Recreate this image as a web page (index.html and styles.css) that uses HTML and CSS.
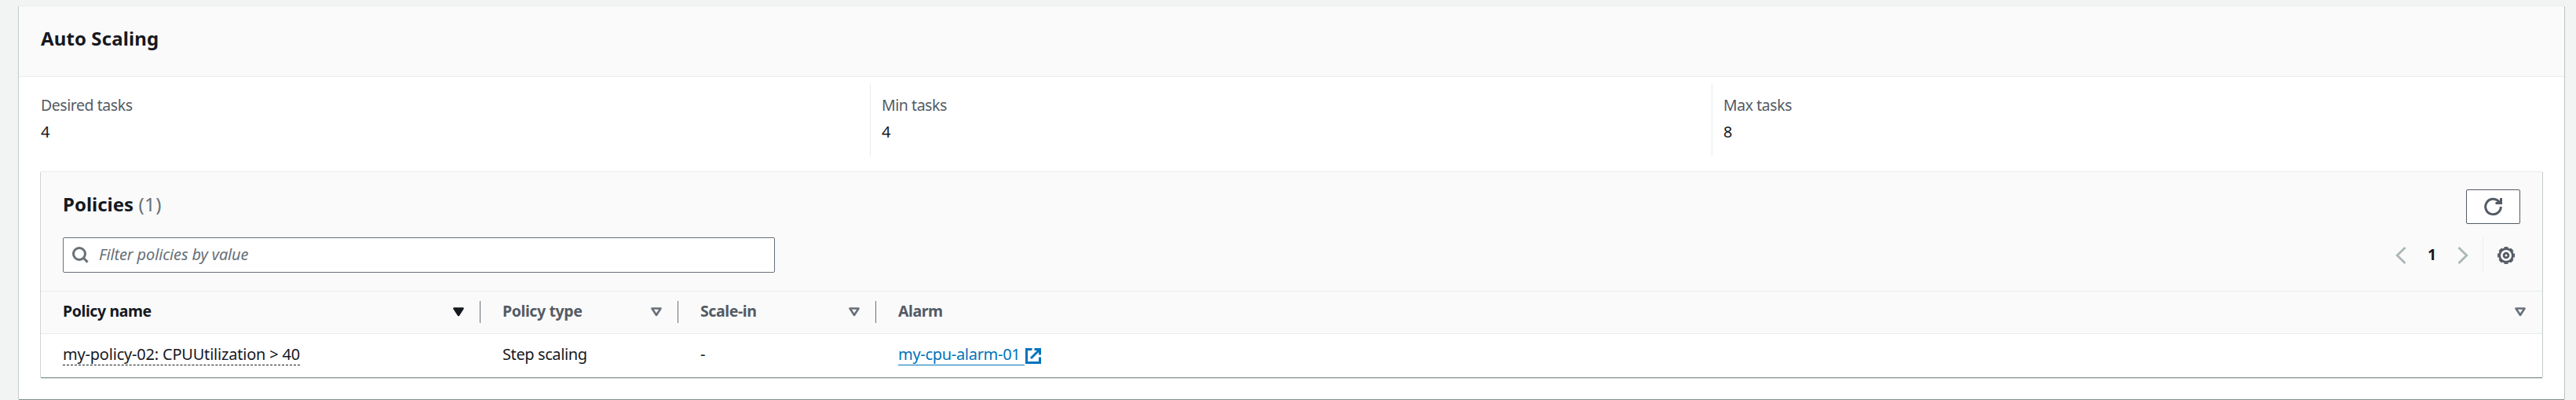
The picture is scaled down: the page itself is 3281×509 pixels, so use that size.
FILE: index.html
```
<!DOCTYPE html>
<html lang="en">
<head>
<meta charset="utf-8">
<title>Auto Scaling</title>
<link rel="stylesheet" href="styles.css">
</head>
<body>
<main class="card">
  <header class="card-header"><h2 class="title title-main">Auto Scaling</h2></header>
  <dl class="stats">
    <div class="stat"><dt>Desired tasks</dt><dd>4</dd></div>
    <div class="stat"><dt>Min tasks</dt><dd>4</dd></div>
    <div class="stat"><dt>Max tasks</dt><dd>8</dd></div>
  </dl>
  <section class="panel">
    <div class="panel-top">
      <h2 class="title">Policies <span class="count">(1)</span></h2>
      <button class="refresh" aria-label="Refresh">
        <svg width="24" height="24" viewBox="0 0 24 24"><path d="M21.3 12A9.8 9.8 0 1 1 18.6 5.2L20 7M21.5 1V7.5H14.5"/></svg>
      </button>
    </div>
    <div class="tools">
      <div class="search">
        <svg width="21" height="21" viewBox="0 0 21 21"><circle cx="9" cy="9" r="7.5"/><path d="M14.3 14.3 19.6 19.6"/></svg>
        <span class="placeholder">Filter policies by value</span>
      </div>
      <div class="pager">
        <svg class="chev" width="14" height="22" viewBox="0 0 14 22"><path d="M12.5 1 2.2 11 12.5 21"/></svg>
        <b class="page">1</b>
        <svg class="chev" width="14" height="22" viewBox="0 0 14 22"><path d="M1.5 1 11.8 11 1.5 21"/></svg>
        <span class="prefs">
          <svg class="gear" width="24" height="24" viewBox="-12 -12 24 24"><circle r="8.4"/><circle class="teeth" r="10.2" pathLength="16"/><circle r="2.9"/></svg>
        </span>
      </div>
    </div>
    <div class="row head">
      <div class="cell active">Policy name<svg width="14" height="12" viewBox="0 0 14 12"><path class="solid" d="M1.5 1.5H12.5L7 10Z"/></svg></div>
      <div class="cell">Policy type<svg width="14" height="12" viewBox="0 0 14 12"><path d="M1.5 1.5H12.5L7 10Z"/></svg></div>
      <div class="cell">Scale-in<svg width="14" height="12" viewBox="0 0 14 12"><path d="M1.5 1.5H12.5L7 10Z"/></svg></div>
      <div class="cell">Alarm<svg width="14" height="12" viewBox="0 0 14 12"><path d="M1.5 1.5H12.5L7 10Z"/></svg></div>
    </div>
    <div class="row body">
      <div class="cell"><span class="policy">my-policy-02: CPUUtilization &gt; 40</span></div>
      <div class="cell type">Step scaling</div>
      <div class="cell">-</div>
      <div class="cell"><a class="link"><span class="link-text">my-cpu-alarm-01</span><svg width="20" height="20" viewBox="0 0 20 20"><path d="M8.5 1.5H1.5V18.5H18.5V11.5M11.5 1.5H18.5V8.5M18 2 7 13"/></svg></a></div>
    </div>
  </section>
</main>
</body>
</html>
```
FILE: styles.css
```
* { box-sizing: border-box; }
body {
  margin: 0;
  height: 509px;
  overflow: hidden;
  padding: 8px 15px 0 24px;
  background: #f2f3f3;
  color: #16191f;
  font: 20px/30px "Noto Sans", sans-serif;
}
svg { fill: none; stroke: currentColor; flex: none; display: block; }
.card {
  height: 500px;
  background: #fff;
  box-shadow: 0 -1px 0 #eaeded, -1px 0 0 #c5cccf, 1px 0 0 #b9c3c7, 0 1px 0 #7f8c8d;
}
.card-header {
  height: 90px;
  padding: 23px 28px 0;
  background: #fafafa;
  border-bottom: 1px solid #eaeded;
}
.title { margin: 0; font-size: 24px; line-height: 36px; font-weight: 700; }
.title-main { letter-spacing: .1px; }
.count { font-weight: 400; color: #687078; letter-spacing: .5px; }
.stats {
  display: grid;
  grid-template-columns: 1084px 1072px 1fr;
  height: 93px;
  margin: 8px 0 0;
}
.stat { padding: 13px 0 0 14px; border-left: 1px solid #eaeded; }
.stat:first-child { padding-left: 28px; border-left: 0; }
dt { color: #545b64; font-size: 19.5px; line-height: 30px; letter-spacing: -.45px; }
dd { margin: 4px 0 0; line-height: 30px; }
.panel {
  width: 3186px;
  height: 261px;
  margin: 20px 0 0 28px;
  background: #fff;
  box-shadow: 0 -1px 0 #eaeded, -1px 0 0 #cdd3d5, 1px 0 0 #c5ccd0, 0 1px 0 #879596, 0 2px 0 #d5dbdb;
}
.panel-top {
  display: flex;
  justify-content: space-between;
  align-items: flex-start;
  height: 83px;
  padding: 22px 28px 0;
  background: #fafafa;
}
.panel-top .title { padding-top: 1px; }
.refresh {
  display: grid;
  place-items: center;
  width: 69px;
  height: 44px;
  padding: 0;
  border: 1px solid #545b64;
  border-radius: 2px;
  background: #fff;
  color: #545b64;
  stroke-width: 3;
}
.tools {
  display: flex;
  justify-content: space-between;
  height: 69px;
  padding: 0 28px;
  background: #fafafa;
  border-bottom: 1px solid #eaeded;
}
.search {
  display: flex;
  align-items: center;
  gap: 13px;
  width: 907px;
  height: 45px;
  padding-left: 11px;
  border: 1px solid #687078;
  border-radius: 2px;
  background: #fff;
  color: #687078;
  stroke-width: 3;
}
.placeholder { font-style: italic; padding-bottom: 1px; letter-spacing: -.15px; }
.pager { display: flex; align-items: center; height: 46px; }
.chev { color: #aab7b8; stroke-width: 2.8; }
.page { width: 65px; text-align: center; padding-bottom: 2px; font-size: 19.5px; }
.prefs {
  display: flex;
  align-items: center;
  height: 44px;
  margin: 0 6px 0 18px;
  padding-left: 17px;
  border-left: 1px solid #eaeded;
}
.gear { color: #545b64; stroke-width: 2.8; }
.teeth { stroke-width: 1.7; stroke-dasharray: 1.3 .7; stroke-dashoffset: .65; }
.row { display: grid; grid-template-columns: 560px 252px 252px 1fr; }
.head {
  height: 54px;
  padding: 12px 0 13px;
  background: #fafafa;
  border-bottom: 1px solid #eaeded;
  color: #545b64;
  font-weight: 700;
  font-size: 19.5px;
  line-height: 24px;
  letter-spacing: -.4px;
}
.cell { display: flex; align-items: center; padding-left: 28px; }
.head .cell { justify-content: space-between; padding-right: 20px; padding-bottom: 3px; border-right: 1px solid #687078; }
.head .cell:last-child { border-right: 0; padding-right: 21px; }
.head svg { margin-top: 2px; color: #687078; stroke-width: 2.6; stroke-linejoin: round; }
.head .active, .head .active svg { color: #16191f; }
.solid { fill: currentColor; }
.body { height: 55px; padding-top: 11px; align-items: start; }
.type { letter-spacing: -.4px; }
.policy { height: 29px; line-height: 30px; border-bottom: 1px dashed #16191f; letter-spacing: -.2px; }
.link { display: flex; color: #0073bb; stroke-width: 3; gap: 1px; }
.link-text { height: 29px; line-height: 30px; padding-right: 6px; border-bottom: 1px solid #0073bb; letter-spacing: -.3px; }
.link svg { margin-top: 7px; }
```
